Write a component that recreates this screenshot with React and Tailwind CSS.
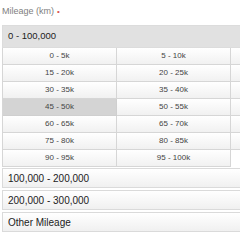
import React from 'react'

const ranges = [
  '0 - 5k', '5 - 10k', '10 - 15k',
  '15 - 20k', '20 - 25k', '25 - 30k',
  '30 - 35k', '35 - 40k', '40 - 45k',
  '45 - 50k', '50 - 55k', '55 - 60k',
  '60 - 65k', '65 - 70k', '70 - 75k',
  '75 - 80k', '80 - 85k', '85 - 90k',
  '90 - 95k', '95 - 100k',
]

const otherGroups = ['100,000 - 200,000', '200,000 - 300,000', 'Other Mileage']

function RangeCell({ label, active }) {
  return (
    <div
      className={
        active
          ? 'flex h-[17px] items-center justify-center border-b border-r border-[#cfcfcf] bg-[#d4d4d4] text-[8px] text-[#444]'
          : 'flex h-[17px] items-center justify-center border-b border-r border-[#d6d6d6] bg-gradient-to-b from-white to-[#f1f1f1] text-[8px] text-[#444]'
      }
    >
      {label}
    </div>
  )
}

export default function App() {
  return (
    <div className="h-[240px] w-[240px] overflow-hidden bg-white" style={{ fontFamily: '"Liberation Sans", Arial, sans-serif' }}>
      <div className="w-[345px] pl-[2px] pt-[5px]">
        <div className="flex h-[13px] items-center text-[9px] text-[#808080]">
          Mileage (km)
          <span className="ml-[3px] text-[8px] text-[#d9534f]">•</span>
        </div>

        <div className="mt-[7px] flex h-[23px] items-center border border-[#dcdcdc] bg-[#e1e1e1] pl-[5px] text-[9.5px] text-[#222]">
          0 - 100,000
        </div>

        <div className="grid grid-cols-3 border-l border-[#d6d6d6]">
          {ranges.map((r) => (
            <RangeCell key={r} label={r} active={r === '45 - 50k'} />
          ))}
        </div>

        <div className="flex flex-col gap-[2px] pt-[1px]">
          {otherGroups.map((g) => (
            <div
              key={g}
              className="flex h-[20px] items-center border border-[#dadada] bg-gradient-to-b from-white to-[#f0f0f0] pl-[5px] text-[10px] text-[#222]"
            >
              {g}
            </div>
          ))}
        </div>
      </div>
    </div>
  )
}
